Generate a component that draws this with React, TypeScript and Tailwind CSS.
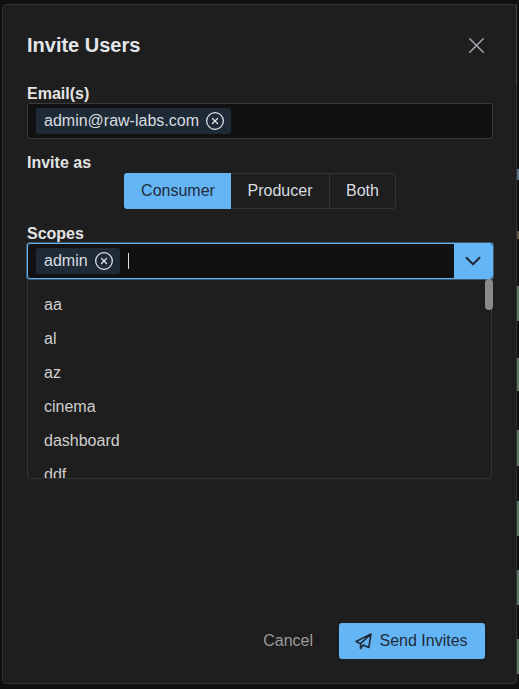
import { X, ChevronDown, CircleX } from "lucide-react";

const FONT = "font-['Liberation_Sans',Arial,sans-serif]";

const SCOPES = ["aa", "al", "az", "cinema", "dashboard", "ddf"];

// page behind the modal, only a 2px sliver of it shows on the right
const BEHIND = [
  { h: 169, c: "bg-[#0f0f0f]" },
  { h: 11, c: "bg-[#5c6f80]" },
  { h: 51, c: "bg-[#0f0f0f]" },
  { h: 8, c: "bg-[#6b5a44]" },
  { h: 47, c: "bg-[#0f0f0f]" },
  { h: 35, c: "bg-[#5f7566]" },
  { h: 37, c: "bg-[#0f0f0f]" },
  { h: 33, c: "bg-[#5f7566]" },
  { h: 39, c: "bg-[#0f0f0f]" },
  { h: 36, c: "bg-[#5f7566]" },
  { h: 35, c: "bg-[#0f0f0f]" },
  { h: 35, c: "bg-[#5f7566]" },
  { h: 34, c: "bg-[#0f0f0f]" },
  { h: 35, c: "bg-[#5f7566]" },
  { h: 34, c: "bg-[#0f0f0f]" },
  { h: 35, c: "bg-[#5f7566]" },
];

function Tag({ label }: { label: string }) {
  return (
    <span className="flex h-[26px] items-center gap-[6px] rounded-[3px] bg-[#1e2a35] pl-2 pr-[6px] text-base text-[#d8dce0]">
      {label}
      <CircleX size={20} strokeWidth={1.5} className="text-[#e4e6e8]" />
    </span>
  );
}

function SendIcon() {
  return (
    <svg width="17" height="17" viewBox="0 0 17 17" fill="none" stroke="#1f2b38" strokeWidth="1.6" strokeLinejoin="round" strokeLinecap="round">
      <path d="M16 1 1 8.5l4.5 2.2L16 1l-2.2 13.5-5.6-2.6-2.7 3.6v-4.8" />
    </svg>
  );
}

export default function App() {
  return (
    <div className={`${FONT} flex h-[689px] w-[519px] bg-[#0f0f0f]`}>
      <div className="flex flex-1 pb-[5px] pl-[2px] pt-1">
        <div className="relative flex flex-1 flex-col rounded-[4px] border border-[#333333] bg-[#1e1e1e] pb-6 pl-[24px] pr-[23px]">
          <div className="absolute -right-px -top-px h-[81px] w-px bg-[#444444]" />
          <div className="flex h-[80px] items-center justify-between">
            <h2 className="text-xl font-bold text-[#e3e6ea]">Invite Users</h2>
            <X size={27} strokeWidth={1.35} className="mr-[3px] text-[#a0a4a8]" />
          </div>

          <label className="text-base leading-[18px] font-bold text-[#e3e3e3]">Email(s)</label>
          <div className="flex h-9 items-center rounded-[3px] border border-[#3a3a3a] bg-[#111111] px-2">
            <Tag label="admin@raw-labs.com" />
          </div>

          <label className="mt-[15px] text-base leading-[18px] font-bold text-[#e3e3e3]">Invite as</label>
          <div className="ml-[97px] mt-px flex h-9 w-[272px] rounded-[3px] border border-[#333333] text-base">
            <span className="-my-px -ml-px flex w-[107px] items-center justify-center rounded-l-[3px] bg-[#64b5f6] pl-px text-[#1f2b38]">Consumer</span>
            <span className="flex w-[99px] items-center justify-center border-r border-[#333333] text-[#d8dce0]">Producer</span>
            <span className="flex flex-1 items-center justify-center text-[#d8dce0]">Both</span>
          </div>

          <label className="mt-[16px] text-base leading-[18px] font-bold text-[#e3e3e3]">Scopes</label>
          <div className="relative flex h-9 overflow-hidden rounded-[3px] border border-[#64b5f6] bg-[#111111] ring-1 ring-[#64b5f6]/40">
            <div className="flex flex-1 items-center px-2">
              <Tag label="admin" />
              <span className="ml-2 h-4 w-px bg-[#e0e0e0]" />
            </div>
            <div className="flex w-[38px] items-center justify-center bg-[#64b5f6]">
              <ChevronDown size={26} strokeWidth={1.9} className="text-[#1f2b38]" />
            </div>
          </div>

          <div className="relative w-[465px]">
            <div className="h-[200px] overflow-hidden rounded-b-[3px] border-x border-b border-[#333333] pt-[9px]">
              {SCOPES.map((scope) => (
                <div key={scope} className="flex h-[34px] items-center pl-4 text-base text-[#cfcfcf]">
                  {scope}
                </div>
              ))}
            </div>
            <div className="absolute -right-px top-0 h-[31px] w-2 rounded-[4px] bg-[#8a8a8a]" />
          </div>

          <div className="mr-2 mt-auto flex items-center justify-end">
            <span className="mr-[26px] text-base text-[#9a9a9a]">Cancel</span>
            <button className="flex h-9 w-[146px] items-center justify-center gap-[7px] rounded-[3px] bg-[#64b5f6] pr-px text-base text-[#1f2b38]">
              <SendIcon />
              Send Invites
            </button>
          </div>
        </div>
      </div>
      <div className="flex w-[2px] flex-col">
        {BEHIND.map((b, i) => (
          <div key={i} className={b.c} style={{ height: b.h }} />
        ))}
      </div>
    </div>
  );
}
